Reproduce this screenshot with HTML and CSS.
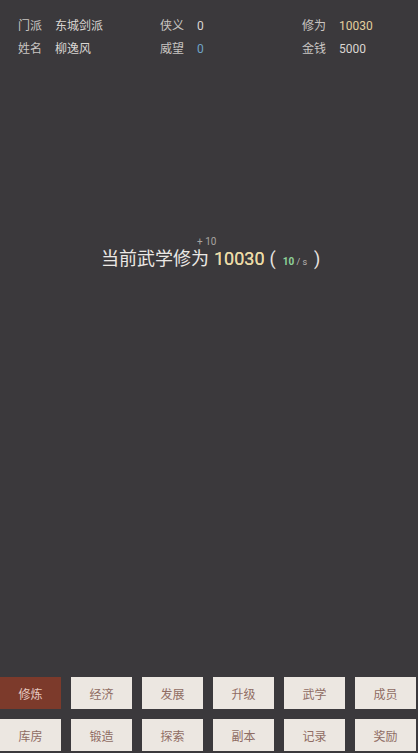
FILE: index.html
```html
<!DOCTYPE html>
<html lang="zh">
<head>
<meta charset="utf-8">
<link rel="stylesheet" href="styles.css">
</head>
<body>
<div class="page">
  <div class="info">
    <div class="cell"><span class="lbl">门派</span><span class="val">东城剑派</span></div>
    <div class="cell"><span class="lbl">侠义</span><span class="val">0</span></div>
    <div class="cell"><span class="lbl">修为</span><span class="val gold">10030</span></div>
    <div class="cell"><span class="lbl">姓名</span><span class="val">柳逸风</span></div>
    <div class="cell"><span class="lbl">威望</span><span class="val blue">0</span></div>
    <div class="cell"><span class="lbl">金钱</span><span class="val">5000</span></div>
  </div>
  <div class="main">
    <div class="headline">
      <span class="title">当前武学修为</span>
      <span class="num">10030<span class="plus">+ 10</span></span>
      <span class="paren">(</span>
      <span class="rate"><span class="green">10</span> / s</span>
      <span class="paren">)</span>
    </div>
  </div>
  <div class="tabs">
    <div class="btn active">修炼</div>
    <div class="btn">经济</div>
    <div class="btn">发展</div>
    <div class="btn">升级</div>
    <div class="btn">武学</div>
    <div class="btn">成员</div>
    <div class="btn">库房</div>
    <div class="btn">锻造</div>
    <div class="btn">探索</div>
    <div class="btn">副本</div>
    <div class="btn">记录</div>
    <div class="btn">奖励</div>
  </div>
</div>
</body>
</html>
```
FILE: styles.css
```css
html, body {
  margin: 0;
  padding: 0;
  background: #3b393c;
}
body {
  font-family: Roboto, "Noto Sans CJK SC", sans-serif;
  color: #d8d4d0;
}
.page {
  height: 753px;
  display: flex;
  flex-direction: column;
}
.info {
  display: grid;
  grid-template-columns: 142px 142px 1fr;
  padding: 15px 0 0 18px;
  font-size: 12px;
  line-height: 23px;
}
.cell {
  display: flex;
  gap: 13px;
}
.lbl { color: #c9c5c2; }
.val { color: #dad6d2; }
.gold { color: #e3cf9c; }
.blue { color: #6fa5c8; }
.main {
  flex: 1;
}
.headline {
  margin-top: 186px;
  padding-left: 101px;
  display: flex;
  align-items: baseline;
  line-height: 24px;
  white-space: nowrap;
}
.title {
  font-size: 18px;
  color: #ebe8e5;
}
.num {
  position: relative;
  font-size: 18px;
  font-weight: 400;
  color: #ecdba6;
  margin-left: 5px;
  text-shadow: 0 0 0.4px #ecdba6;
}
.plus {
  position: absolute;
  left: -17px;
  top: -11px;
  font-size: 10px;
  line-height: 12px;
  font-weight: 400;
  color: #a8a4a0;
  text-shadow: none;
}
.paren {
  font-size: 18px;
  color: #e8e4e0;
  margin-left: 5px;
}
.rate {
  font-size: 9px;
  color: #bcb8b4;
  margin-left: 7px;
  margin-right: 2px;
}
.green {
  color: #8fd39a;
  font-weight: 700;
  font-size: 10px;
}
.tabs {
  display: grid;
  grid-template-columns: repeat(6, 61px);
  grid-auto-rows: 32px;
  gap: 10px;
  padding-bottom: 2px;
}
.btn {
  background: #ece7e1;
  color: #8f6c63;
  font-size: 12px;
  display: flex;
  align-items: center;
  justify-content: center;
}
.btn.active {
  background: #7c3a2b;
  color: #e6c9c1;
}
```
